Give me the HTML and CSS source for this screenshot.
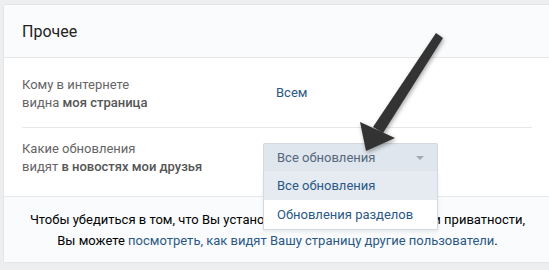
FILE: index.html
```html
<!DOCTYPE html>
<html lang="ru">
<head>
    <meta charset="UTF-8">
    <title>Настройки приватности</title>
    <link rel="stylesheet" href="styles.css">
</head>
<body>
    <div class="page">
        <div class="card">
            <div class="card-header">Прочее</div>

            <div class="settings">
                <div class="row">
                    <div class="label">Кому в интернете<br>видна <b>моя страница</b></div>
                    <div class="value"><span class="link-value">Всем</span></div>
                </div>
                <div class="row">
                    <div class="label">Какие обновления<br>видят <b>в новостях мои друзья</b></div>
                    <div class="value">
                        <div class="select">
                            <div class="select-current">
                                Все обновления
                                <span class="caret"></span>
                            </div>
                            <ul class="select-menu">
                                <li class="active">Все обновления</li>
                                <li>Обновления разделов</li>
                            </ul>
                        </div>
                    </div>
                </div>
            </div>

            <div class="card-footer">
                Чтобы убедиться в том, что Вы установили подходящие настройки приватности,<br>
                Вы можете <a href="#">посмотреть, как видят Вашу страницу другие пользователи</a>.
            </div>
        </div>

        <!-- стрелка поверх -->
        <svg class="pointer" width="549" height="270" viewBox="0 0 549 270">
            <polygon points="436,33 443,38 383,133 373,127" />
            <polygon points="360,122 366,151 395,138" />
        </svg>
    </div>
</body>
</html>
```

FILE: styles.css
```css
* {
    margin: 0;
    padding: 0;
    box-sizing: border-box;
}

body {
    font-family: Roboto, "Open Sans", "DejaVu Sans", sans-serif;
    font-size: 13px;
    color: #000;
    background-color: #edeef0;
    overflow: hidden;
    width: 549px;
    height: 270px;
}

.page {
    position: relative;
    padding: 4px 0 0 3px;
}

.card {
    width: 570px;
    background-color: #fff;
    border: 1px solid #e3e4e8;
    border-radius: 3px;
}

.card-header {
    height: 53px;
    padding: 0 18px;
    display: flex;
    align-items: center;
    font-size: 16px;
    color: #222;
    background-color: #fafbfc;
    border-bottom: 1px solid #e7e8ec;
}

.settings {
    padding: 0 18px;
}

.row {
    display: flex;
    height: 69px;
    padding-top: 18px;
    width: 510px;
}

.row + .row {
    border-top: 1px solid #e7e8ec;
    padding-top: 12px;
}

.label {
    width: 241px;
    line-height: 18px;
    color: #656565;
}

.label b {
    font-weight: 500;
    color: #555;
}

.value {
    flex: 1;
}

.link-value {
    display: inline-block;
    padding: 9px 13px 0;
    color: #2a5885;
}

.select {
    position: relative;
    width: 175px;
    margin-top: 3px;
}

.select-current {
    height: 28px;
    display: flex;
    align-items: center;
    padding: 0 13px;
    color: #55677d;
    background-color: #dfe6ed;
    border: 1px solid #d3d9de;
    border-bottom: none;
    border-radius: 2px 2px 0 0;
}

.caret {
    margin-left: auto;
    border-left: 4px solid transparent;
    border-right: 4px solid transparent;
    border-top: 4px solid #a0aab5;
}

.select-menu {
    position: absolute;
    top: 28px;
    left: 0;
    width: 175px;
    list-style: none;
    background-color: #fff;
    border: 1px solid #d3d9de;
    border-top: none;
    box-shadow: 0 2px 4px rgb(0 0 0 / 0.08);
    z-index: 2;
}

.select-menu li {
    height: 29px;
    padding: 0 13px;
    display: flex;
    align-items: center;
    color: #2a5885;
}

.select-menu li.active {
    background-color: #e5ebf1;
}

.card-footer {
    height: 66px;
    padding-top: 12px;
    padding-right: 21px;
    text-align: center;
    line-height: 21px;
    background-color: #fafbfc;
    border-top: 1px solid #e7e8ec;
}

.card-footer a {
    color: #2a5885;
    text-decoration: none;
}

.pointer {
    position: absolute;
    top: 0;
    left: 0;
    z-index: 3;
    fill: #333;
    filter: drop-shadow(1px 2px 2px rgb(0 0 0 / 0.35));
}
```
